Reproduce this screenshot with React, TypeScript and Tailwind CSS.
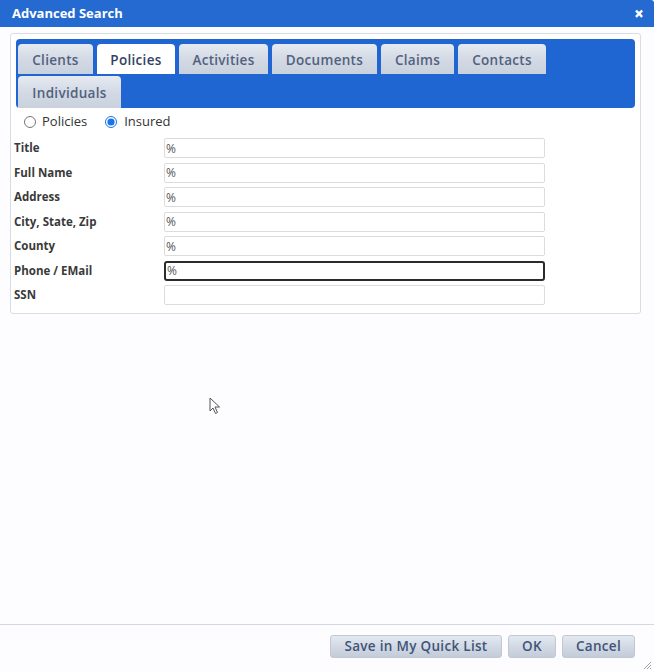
import React, { useState } from 'react';

const TABS_ROW1: { label: string; w: string }[] = [
  { label: 'Clients', w: 'w-[75px]' },
  { label: 'Policies', w: 'w-[78px]' },
  { label: 'Activities', w: 'w-[89px]' },
  { label: 'Documents', w: 'w-[105px]' },
  { label: 'Claims', w: 'w-[73px]' },
  { label: 'Contacts', w: 'w-[88px]' },
];
const TABS_ROW2: { label: string; w: string }[] = [{ label: 'Individuals', w: 'w-[103px]' }];

const FIELDS: { label: string; value: string }[] = [
  { label: 'Title', value: '%' },
  { label: 'Full Name', value: '%' },
  { label: 'Address', value: '%' },
  { label: 'City, State, Zip', value: '%' },
  { label: 'County', value: '%' },
  { label: 'Phone / EMail', value: '%' },
  { label: 'SSN', value: '' },
];

const Tab: React.FC<{ label: string; w: string; active: boolean; onClick: () => void; tall?: boolean }> = ({
  label,
  w,
  active,
  onClick,
  tall,
}) => (
  <button
    onClick={onClick}
    className={
      w +
      ' pt-[3px] rounded-t-[4px] text-[13.5px] font-semibold leading-none tracking-[0.3px] ' +
      (tall ? 'h-[32px] ' : 'h-[30px] ') +
      (active
        ? 'bg-white text-[#33435f]'
        : 'bg-gradient-to-b from-[#e6eaf1] via-[#d3dae5] to-[#c9d1dd] text-[#52617d]')
    }
  >
    {label}
  </button>
);

const FooterButton: React.FC<{ label: string; className?: string }> = ({ label, className }) => (
  <button
    className={
      'h-[23px] rounded-[3px] bg-gradient-to-b from-[#e4e9f0] via-[#d2d9e4] to-[#c3ccd9] border border-[#c0c8d4] text-[13.5px] font-semibold tracking-[0.3px] text-[#3f5479] ' +
      (className ?? '')
    }
  >
    {label}
  </button>
);

export default function App() {
  const [tab, setTab] = useState('Policies');
  const [mode, setMode] = useState<'policies' | 'insured'>('insured');
  const [values, setValues] = useState(FIELDS.map((f) => f.value));

  return (
    <div
      className="w-[654px] h-[672px] bg-[#fdfcfe] flex flex-col relative overflow-hidden"
      style={{ fontFamily: '"Open Sans", "DejaVu Sans", sans-serif' }}
    >
      {/* title bar */}
      <div className="h-[27px] bg-[#246ad0] flex items-center justify-between pl-[12px] pr-[10px] rounded-tr-[3px]">
        <span className="text-white text-[13px] font-bold">Advanced Search</span>
        <span className="text-white text-[17px] font-black leading-none">×</span>
      </div>

      {/* content */}
      <div className="px-[10px] pt-[6px]">
        <div className="w-[631px] h-[281px] border border-[#d8dde4] rounded-[3px] bg-white p-[5px] pb-0">
          <div className="bg-[#1f66d2] rounded-[4px] pl-[2px] pt-[5px] flex flex-col gap-[2px]">
            <div className="flex gap-[4px]">
              {TABS_ROW1.map((t) => (
                <Tab key={t.label} label={t.label} w={t.w} active={tab === t.label} onClick={() => setTab(t.label)} />
              ))}
            </div>
            <div className="flex gap-[4px]">
              {TABS_ROW2.map((t) => (
                <Tab key={t.label} label={t.label} w={t.w} active={tab === t.label} onClick={() => setTab(t.label)} tall />
              ))}
            </div>
          </div>

          <div className="flex items-center h-[28px] pl-[8px] text-[13px] text-[#333]">
            <label className="flex items-center gap-[6px] mr-[18px]">
              <input
                type="radio"
                checked={mode === 'policies'}
                onChange={() => setMode('policies')}
                className="w-[12px] h-[12px] accent-[#1a73e8]"
              />
              Policies
            </label>
            <label className="flex items-center gap-[7px]">
              <input
                type="radio"
                checked={mode === 'insured'}
                onChange={() => setMode('insured')}
                className="w-[12px] h-[12px] accent-[#1a73e8]"
              />
              Insured
            </label>
          </div>

          <div className="flex flex-col gap-[4.5px] -ml-[2px] pt-[2px]">
            {FIELDS.map((f, i) => (
              <div key={f.label} className="flex items-center h-[20px]">
                <span className="w-[150px] text-[11.5px] font-bold text-[#3a3a3a]">{f.label}</span>
                <input
                  value={values[i]}
                  onChange={(e) => setValues(values.map((v, j) => (j === i ? e.target.value : v)))}
                  className={
                    'w-[381px] h-[20px] px-[1px] text-[12px] text-[#555] bg-white outline-none ' +
                    (f.label === 'Phone / EMail'
                      ? 'border-2 border-[#2b2b2b] rounded-[3px]'
                      : 'border border-[#dcdcdc] rounded-[2px]')
                  }
                />
              </div>
            ))}
          </div>
        </div>
      </div>

      <div className="flex-1" />

      {/* footer */}
      <div className="h-[48px] border-t border-[#d4d8de] flex items-start justify-end gap-[6px] pr-[19px] pt-[10px]">
        <FooterButton label="Save in My Quick List" className="w-[172px]" />
        <FooterButton label="OK" className="w-[48px]" />
        <FooterButton label="Cancel" className="w-[73px]" />
      </div>

      {/* mouse pointer */}
      <svg className="absolute left-[209px] top-[397px]" width="13" height="18" viewBox="0 0 13 18">
        <path d="M1 1 L1 14 L4 11 L6.5 16.5 L8.5 15.5 L6 10 L10.5 10 Z" fill="white" stroke="#555" strokeWidth="1" />
      </svg>

      {/* resize grip */}
      <svg className="absolute right-[2px] bottom-[2px]" width="10" height="10" viewBox="0 0 10 10">
        <path d="M9 2 L2 9 M9 5 L5 9 M9 8 L8 9" stroke="#a0a0a0" strokeWidth="1" />
      </svg>
    </div>
  );
}
